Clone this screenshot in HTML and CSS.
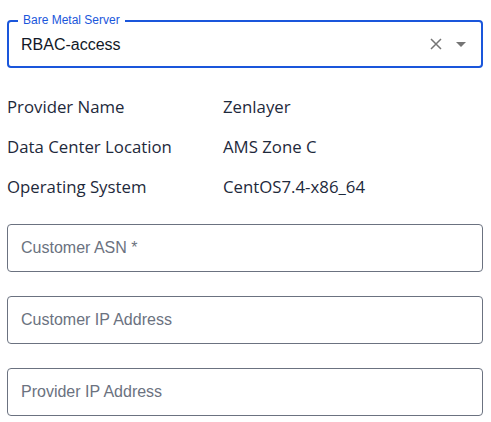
FILE: index.html
```html
<!DOCTYPE html>
<html lang="en">
<head>
<meta charset="UTF-8">
<meta name="viewport" content="width=device-width, initial-scale=1.0">
<title>Bare Metal Server</title>
<link rel="stylesheet" href="styles.css">
</head>
<body>

<div class="form">
  <div class="select">
    <span class="select-label">Bare Metal Server</span>
    <span class="select-value">RBAC-access</span>
    <span class="select-clear">
      <svg width="12" height="12" viewBox="0 0 12 12"><path d="M1 1L11 11M11 1L1 11" stroke="#757575" stroke-width="1.5" fill="none"/></svg>
    </span>
    <span class="select-caret">
      <svg width="10" height="5" viewBox="0 0 10 5"><path d="M0 0H10L5 5Z" fill="#757575"/></svg>
    </span>
  </div>

  <div class="details">
    <div class="row"><span class="key">Provider Name</span><span class="val">Zenlayer</span></div>
    <div class="row"><span class="key">Data Center Location</span><span class="val">AMS Zone C</span></div>
    <div class="row"><span class="key">Operating System</span><span class="val">CentOS7.4-x86_64</span></div>
  </div>

  <div class="field"><input type="text" placeholder="Customer ASN *"></div>
  <div class="field"><input type="text" placeholder="Customer IP Address"></div>
  <div class="field"><input type="text" placeholder="Provider IP Address"></div>
</div>

</body>
</html>
```

FILE: styles.css
```css
body {
  margin: 0;
  background-color: #fff;
  font-family: "Liberation Sans", Arial, sans-serif;
}
.form {
  padding: 20px 8px 0 7px;
  display: flex;
  flex-direction: column;
}
.select {
  position: relative;
  height: 44px;
  border: 2px solid #1a56db;
  border-radius: 4px;
  display: flex;
  align-items: center;
  padding: 0 12px;
}
.select-label {
  position: absolute;
  top: -9px;
  left: 9px;
  padding: 0 5px;
  background-color: #fff;
  color: #1a56db;
  font-size: 12px;
  line-height: 14px;
}
.select-value {
  flex: 1;
  font-size: 16px;
  color: #111827;
  padding-top: 1px;
}
.select-clear {
  display: flex;
  margin-right: 14px;
}
.select-caret {
  display: flex;
  margin-right: 3px;
}
.details {
  padding: 18px 0 6px;
  font-family: "Open Sans", sans-serif;
  font-size: 16.8px;
  color: #1e293b;
}
.row {
  display: flex;
  height: 40px;
  align-items: center;
}
.key {
  width: 216px;
}
.field {
  margin-top: 24px;
}
.details + .field {
  margin-top: 12px;
}
.field input {
  display: block;
  width: 100%;
  box-sizing: border-box;
  height: 48px;
  border: 1px solid #6b7280;
  border-radius: 4px;
  padding: 0 13px;
  font-family: "Liberation Sans", Arial, sans-serif;
  font-size: 16px;
  color: #111827;
  outline: none;
}
.field input::placeholder {
  color: #6b7280;
}
```
